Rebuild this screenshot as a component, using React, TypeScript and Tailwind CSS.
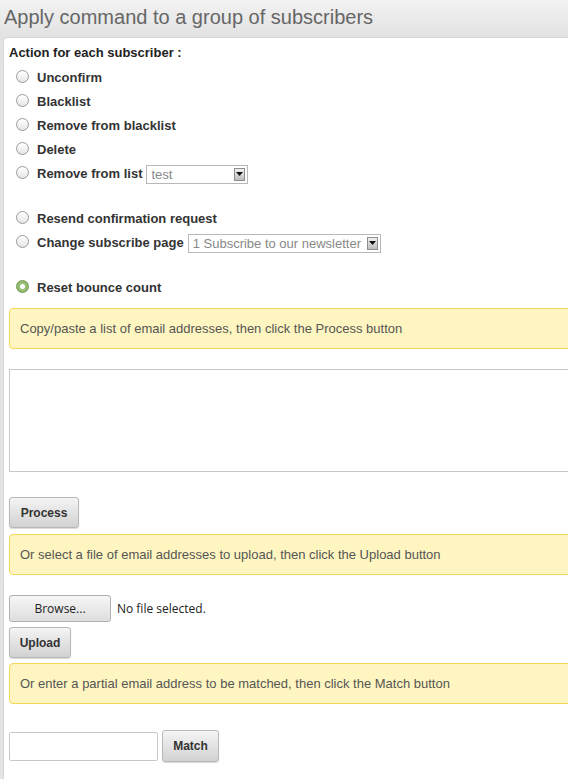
import React from 'react';

const Radio: React.FC<{ checked?: boolean }> = ({ checked }) => (
  <span
    className={`inline-block w-[13px] h-[13px] rounded-full border shrink-0 ${
      checked
        ? 'border-[#6f9a4d] bg-[radial-gradient(circle,#ffffff_0,#ffffff_2px,#9bc27a_3px,#7fae5a_100%)]'
        : 'border-[#9a9a9a] bg-[linear-gradient(#ffffff,#e6e6e6)]'
    }`}
  />
);

const Select: React.FC<{ value: string; width: string }> = ({ value, width }) => (
  <span
    className={`inline-flex items-center h-[19px] border border-[#b8b8b8] bg-white ${width} pl-[4px] pr-[2px] font-normal text-[13px] text-[#888]`}
  >
    <span className="flex-1 leading-none truncate">{value}</span>
    <span className="w-[11px] h-[13px] bg-[linear-gradient(#f2f2f2,#bdbdbd)] border border-[#8d8d8d] flex items-center justify-center">
      <svg width="7" height="4" viewBox="0 0 7 4">
        <path d="M0 0h7L3.5 4z" fill="#111" />
      </svg>
    </span>
  </span>
);

const Option: React.FC<{ label: string; checked?: boolean; children?: React.ReactNode }> = ({
  label,
  checked,
  children,
}) => (
  <div className="flex items-center h-[24px] pl-[7px]">
    <Radio checked={checked} />
    <span className="ml-[8px] font-bold text-[13px] text-[#333] mt-[4px]">{label}</span>
    {children && <span className="ml-[4px] mt-[3px]">{children}</span>}
  </div>
);

const Notice: React.FC<{ text: string }> = ({ text }) => (
  <div className="h-[41px] w-[600px] flex items-center pl-[10px] bg-[#fff5c0] border border-[#f5d75a] rounded-l-[4px] text-[13px] text-[#555]">
    {text}
  </div>
);

const GrayButton: React.FC<{ label: string; className?: string }> = ({ label, className }) => (
  <button
    className={`h-[31px] border border-[#b8b8b8] rounded-[3px] bg-[linear-gradient(#f4f4f4,#d2d2d2)] shadow-[0_1px_1px_rgba(0,0,0,0.15)] font-bold text-[12px] text-[#333] ${className ?? ''}`}
  >
    {label}
  </button>
);

export default function App() {
  return (
    <div className="w-[568px] h-[779px] overflow-hidden bg-[linear-gradient(#f2f2f2,#e2e2e2_37px,#e4e4e4)] font-['Liberation_Sans',Arial,sans-serif]">
      <h1 className="h-[37px] pl-[4px] pt-[5px] text-[20px] leading-[24px] text-[#666]">
        Apply command to a group of subscribers
      </h1>
      <div className="ml-[3px] w-[620px] h-[742px] bg-white border-t border-l border-[#d6d6d6] rounded-tl-[4px] pl-[5px] pt-[7px]">
        <div className="font-bold text-[13px] text-[#222] leading-[16px]">Action for each subscriber :</div>
        <div className="mt-[3px]">
          <Option label="Unconfirm" />
          <Option label="Blacklist" />
          <Option label="Remove from blacklist" />
          <Option label="Delete" />
          <Option label="Remove from list">
            <Select value="test" width="w-[102px]" />
          </Option>
        </div>
        <div className="mt-[21px]">
          <Option label="Resend confirmation request" />
          <Option label="Change subscribe page">
            <Select value="1 Subscribe to our newsletter" width="w-[193px]" />
          </Option>
        </div>
        <div className="mt-[21px]">
          <Option label="Reset bounce count" checked />
        </div>
        <div className="mt-[10px]">
          <Notice text="Copy/paste a list of email addresses, then click the Process button" />
        </div>
        <textarea className="block mt-[20px] w-[600px] h-[103px] border border-[#c8c8c8] resize-none" />
        <GrayButton label="Process" className="mt-[25px] w-[70px] block" />
        <div className="mt-[6px]">
          <Notice text="Or select a file of email addresses to upload, then click the Upload button" />
        </div>
        <div className="mt-[20px] flex items-center h-[27px]">
          <button className="h-[27px] w-[102px] border border-[#b0b0b0] rounded-[3px] bg-[linear-gradient(#f6f6f6,#dedede)] font-['Open_Sans',sans-serif] text-[12px] text-[#222]">
            Browse...
          </button>
          <span className="ml-[6px] font-['Open_Sans',sans-serif] text-[12px] text-[#222]">No file selected.</span>
        </div>
        <GrayButton label="Upload" className="mt-[5px] w-[62px] block" />
        <div className="mt-[5px]">
          <Notice text="Or enter a partial email address to be matched, then click the Match button" />
        </div>
        <div className="mt-[26px] flex items-center">
          <input className="h-[29px] w-[149px] border border-[#c8c8c8] rounded-[2px]" />
          <GrayButton label="Match" className="ml-[4px] w-[57px] h-[32px]" />
        </div>
      </div>
    </div>
  );
}
